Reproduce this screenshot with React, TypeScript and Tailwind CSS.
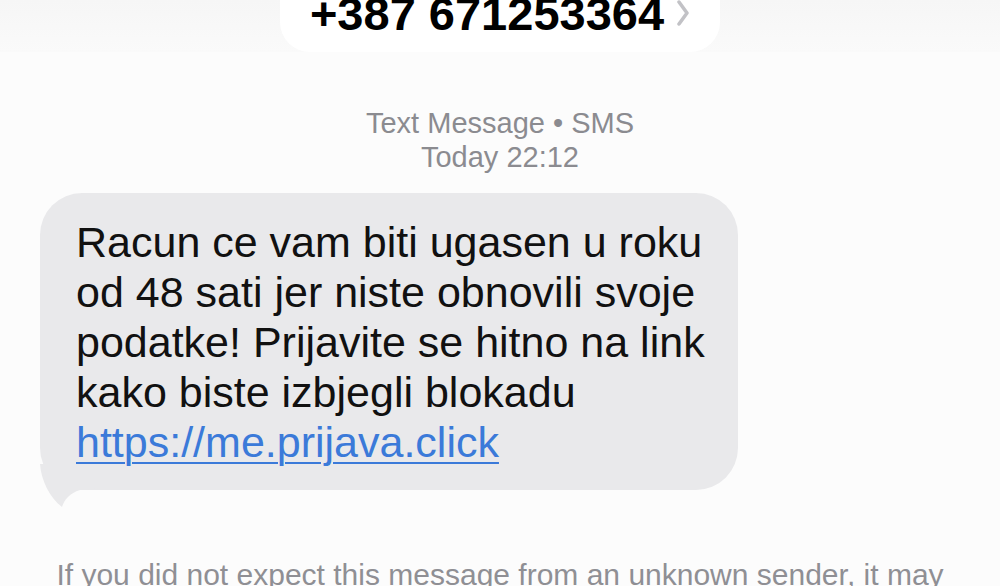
export default function App() {
  return (
    <div className="w-[1000px] h-[586px] overflow-hidden bg-[#fcfcfc] flex flex-col font-['Liberation_Sans',Arial,sans-serif]">
      {/* Contact header */}
      <div className="h-[62px] bg-gradient-to-b from-[#f6f6f6] to-[#fafafa] flex justify-center">
        <div className="w-[440px] h-[80px] -mt-[28px] bg-white rounded-[30px] flex items-center justify-center gap-3">
          <span className="text-[47px] font-bold text-black leading-none mt-[2px]">
            +387 671253364
          </span>
          <svg width="14" height="26" viewBox="0 0 14 26" className="mt-[2px]">
            <path d="M3 2 L11 13 L3 24" fill="none" stroke="#c2c2c6" strokeWidth="3.5" strokeLinecap="round" strokeLinejoin="round" />
          </svg>
        </div>
      </div>

      {/* Timestamp */}
      <div className="mt-[54px] flex flex-col items-center text-[#8b8b90] text-[29px] leading-[34px]">
        <span>Text Message • SMS</span>
        <span>Today 22:12</span>
      </div>

      {/* Bubble */}
      <div className="relative ml-[40px] mt-[19px] w-[698px]">
        <div className="bg-[#e9e9eb] rounded-[42px] pl-[36px] pr-[20px] pt-[24px] pb-[23px] text-[43px] leading-[50px] text-[#111] whitespace-nowrap">
          Racun ce vam biti ugasen u roku
          <br />
          od 48 sati jer niste obnovili svoje
          <br />
          podatke! Prijavite se hitno na link
          <br />
          kako biste izbjegli blokadu
          <br />
          <a href="#" className="text-[#3b7ad9] underline decoration-[2px] underline-offset-[5px]">
            https://me.prijava.click
          </a>
        </div>
        <svg width="60" height="44" viewBox="0 0 60 44" className="absolute left-0 top-full -mt-[26px]">
          <path d="M0 0 C1 16 10 34 22 43 C24 36 30 29 40 26 L58 24 L58 0 Z" fill="#e9e9eb" />
        </svg>
      </div>

      {/* Footer note */}
      <div className="mt-[67px] text-center text-[#8f8f94] text-[30px] leading-[36px] whitespace-nowrap">
        If you did not expect this message from an unknown sender, it may
      </div>
    </div>
  );
}
